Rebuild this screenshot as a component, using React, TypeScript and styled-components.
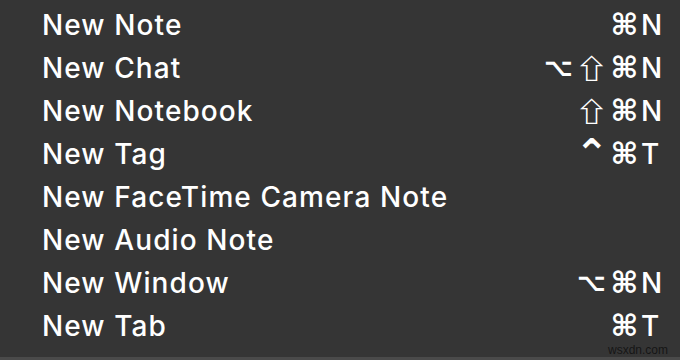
import React from 'react';
import styled, { createGlobalStyle } from 'styled-components';

const GlobalStyle = createGlobalStyle`
  html, body {
    margin: 0;
    padding: 0;
    background: #353535;
  }
`;

const Menu = styled.div`
  position: relative;
  width: 680px;
  height: 360px;
  box-sizing: border-box;
  padding: 3px 17px 0 42px;
  background: #353535;
  border-bottom: 3px solid #4a4a4a;
  font-family: Inter, 'Liberation Sans', sans-serif;
  font-weight: 500;
  color: #ffffff;
  overflow: hidden;
`;

const Row = styled.div`
  display: flex;
  align-items: center;
  justify-content: space-between;
  height: 43px;
  font-size: 28px;
  line-height: 1;
`;

const Label = styled.span`
  white-space: nowrap;
  letter-spacing: 1.1px;
`;

const Shortcut = styled.span`
  display: flex;
  align-items: center;
`;

type Kind = 'cmd' | 'shift' | 'opt' | 'ctrl';

const sizes: Record<Kind, string> = { cmd: '30px', shift: '27px', opt: '25px', ctrl: '40px' };

// ⇧ looks best from the CJK font (widened), the rest from DejaVu
const Mod = styled.span<{ $kind: Kind }>`
  display: inline-block;
  width: 33px;
  text-align: center;
  position: relative;
  font-weight: 700;
  font-family: ${(p) =>
    p.$kind === 'shift' ? "'Noto Sans CJK JP', 'DejaVu Sans', sans-serif" : "'DejaVu Sans', sans-serif"};
  font-size: ${(p) => sizes[p.$kind]};
  top: ${(p) => (p.$kind === 'ctrl' ? '-1px' : '0')};
  transform: ${(p) => (p.$kind === 'shift' ? 'scaleX(1.25)' : 'none')};
`;

const Key = styled.span`
  width: 22px;
  text-align: left;
`;

const Watermark = styled.div`
  position: absolute;
  right: 12px;
  bottom: 1px;
  font-family: 'Liberation Sans', sans-serif;
  font-weight: 400;
  font-size: 12px;
  line-height: 1;
  color: #151515;
`;

const glyph: Record<Kind, string> = { cmd: '⌘', shift: '⇧', opt: '⌥', ctrl: '⌃' };

type Item = { label: string; mods?: Kind[]; key?: string };

const items: Item[] = [
  { label: 'New Note', mods: ['cmd'], key: 'N' },
  { label: 'New Chat', mods: ['opt', 'shift', 'cmd'], key: 'N' },
  { label: 'New Notebook', mods: ['shift', 'cmd'], key: 'N' },
  { label: 'New Tag', mods: ['ctrl', 'cmd'], key: 'T' },
  { label: 'New FaceTime Camera Note' },
  { label: 'New Audio Note' },
  { label: 'New Window', mods: ['opt', 'cmd'], key: 'N' },
  { label: 'New Tab', mods: ['cmd'], key: 'T' },
];

const App = () => {
  return (
    <>
      <GlobalStyle />
      <Menu>
        {items.map((item) => (
          <Row key={item.label}>
            <Label>{item.label}</Label>
            {item.key && (
              <Shortcut>
                {item.mods?.map((m) => (
                  <Mod key={m} $kind={m}>
                    {glyph[m]}
                  </Mod>
                ))}
                <Key>{item.key}</Key>
              </Shortcut>
            )}
          </Row>
        ))}
        <Watermark>wsxdn.com</Watermark>
      </Menu>
    </>
  );
};

export default App;
